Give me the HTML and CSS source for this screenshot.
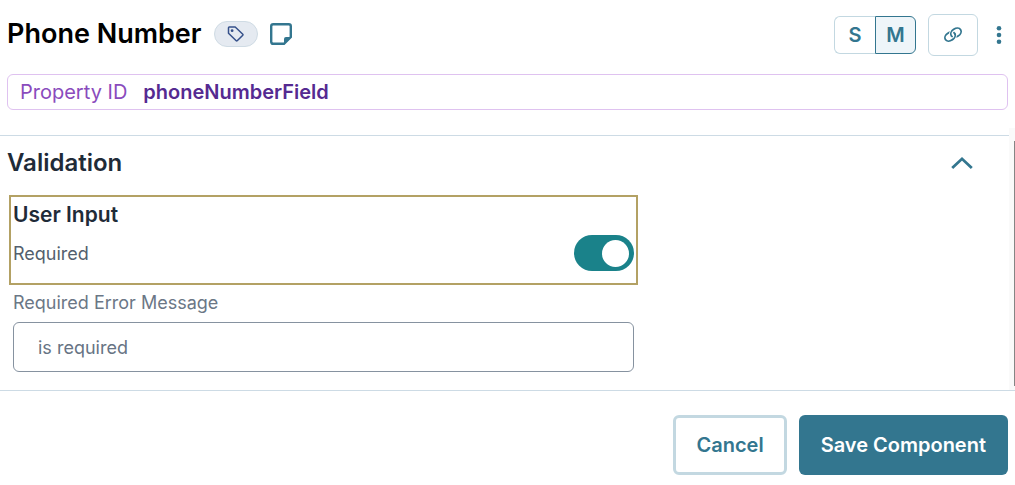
FILE: index.html
```html
<!DOCTYPE html>
<html lang="en">
<head>
<meta charset="utf-8">
<meta name="viewport" content="width=device-width, initial-scale=1">
<title>Phone Number</title>
<link rel="stylesheet" href="styles.css">
</head>
<body>
<form class="editor">
  <header class="header">
    <div class="title-group">
      <h1 class="title">Phone Number</h1>
      <button type="button" class="tag-button" aria-label="Tags">
        <svg width="18" height="18" viewBox="0 0 18 18" fill="none" stroke="#35508a" stroke-width="1.5" stroke-linejoin="round"><path d="M1.5 2.8Q1.5 2 2.3 2H8.2L15.8 9.2Q16.3 9.7 15.8 10.2L10.2 15.7Q9.7 16.2 9.2 15.7L1.5 8.2Z"/><circle cx="5.1" cy="5.7" r="1.4" fill="#35508a" stroke="none"/></svg>
      </button>
      <button type="button" class="icon-button" aria-label="Notes">
        <svg width="22" height="22" viewBox="0 0 22 22"><path d="M3.2 1.2H18.8Q20.8 1.2 20.8 3.2V14L14 20.8H3.2Q1.2 20.8 1.2 18.8V3.2Q1.2 1.2 3.2 1.2Z" fill="none" stroke="#33768f" stroke-width="2.4"/><path d="M14 21.5V16Q14 14 16 14H21.5Z" fill="#33768f"/></svg>
      </button>
    </div>
    <div class="tools">
      <div class="sizes">
        <button type="button" class="size">S</button>
        <button type="button" class="size size-active" aria-pressed="true">M</button>
      </div>
      <button type="button" class="link-button" aria-label="Link">
        <svg width="20" height="18" viewBox="0 0 20 18" fill="none" stroke="#33768f" stroke-width="1.8"><g transform="translate(10 8.6) rotate(-33)"><ellipse cx="-3.5" cy="0" rx="5.6" ry="4"/><path d="M-1.4-1.6A5.6 4 0 0 1 3.5-4" stroke="#fff" stroke-width="3.6"/><ellipse cx="3.5" cy="0" rx="5.6" ry="4"/><path d="M-2.2 4A5.6 4 0 0 0 1.4 1.6" stroke="#fff" stroke-width="3.6"/><path d="M-3.5 4A5.6 4 0 0 0 2.1 0"/></g></svg>
      </button>
      <button type="button" class="icon-button" aria-label="More options">
        <svg width="6" height="20" viewBox="0 0 6 20" fill="#33768f"><circle cx="3" cy="3.2" r="2.3"/><circle cx="3" cy="10" r="2.3"/><circle cx="3" cy="16.8" r="2.3"/></svg>
      </button>
    </div>
  </header>

  <div class="property">
    <span class="property-label">Property ID</span>
    <strong class="property-value">phoneNumberField</strong>
  </div>

  <main class="content">
    <section class="panel">
      <div class="panel-head">
        <h2 class="panel-title">Validation</h2>
        <button type="button" class="icon-button" aria-label="Collapse section" aria-expanded="true">
          <svg width="22" height="14" viewBox="0 0 22 14" fill="none" stroke="#33768f" stroke-width="2.8"><path d="M1.2 12L11 2.8L20.8 12"/></svg>
        </button>
      </div>
      <div class="fields">
        <div class="highlight">
          <h3 class="group-title">User Input</h3>
          <div class="toggle-row">
            <label class="toggle-label" for="required">Required</label>
            <input class="toggle" type="checkbox" role="switch" id="required" checked>
          </div>
        </div>
        <div class="field">
          <label class="field-label" for="message">Required Error Message</label>
          <input class="field-input" type="text" id="message" value="is required">
        </div>
      </div>
    </section>
    <div class="track"><div class="thumb"></div></div>
  </main>

  <footer class="footer">
    <button type="button" class="button button-outline">Cancel</button>
    <button type="submit" class="button button-solid">Save Component</button>
  </footer>
</form>
</body>
</html>
```

FILE: styles.css
```css
* {
  box-sizing: border-box;
}

body {
  margin: 0;
  background: #fff;
  font-family: Inter, "Liberation Sans", sans-serif;
}

h1, h2, h3 {
  margin: 0;
  font-weight: 600;
}

button, input {
  margin: 0;
  font-family: inherit;
}

button {
  display: flex;
  align-items: center;
  justify-content: center;
  padding: 0;
  border: 0;
  background: none;
  cursor: pointer;
}

svg {
  display: block;
}

.header {
  display: flex;
  justify-content: space-between;
  align-items: flex-start;
  padding: 14px 13px 0 7px;
}

.title-group {
  display: flex;
  align-items: center;
  gap: 12px;
}

.title {
  font-size: 27px;
  line-height: 40px;
  color: #000;
}

.tag-button {
  width: 44px;
  height: 26px;
  border: 1px solid #cfdbe4;
  border-radius: 13px;
  background: #e5eaf1;
}

.tools {
  display: flex;
  align-items: center;
  gap: 12px;
}

.sizes {
  display: flex;
}

.size {
  width: 41px;
  height: 38px;
  border: 1px solid #c3d8e1;
  border-right: 0;
  border-radius: 6px 0 0 6px;
  font-size: 20px;
  font-weight: 600;
  color: #33768f;
}

.size-active {
  border: 1px solid #33768f;
  border-radius: 0 6px 6px 0;
  background: #eef5f9;
}

.link-button {
  width: 50px;
  height: 42px;
  margin-right: 6px;
  border: 1px solid #c3d8e1;
  border-radius: 6px;
}

.property {
  display: flex;
  align-items: center;
  gap: 16px;
  margin: 18px 7px;
  padding: 0 12px;
  border: 1px solid #dfc2f0;
  border-radius: 6px;
  font-size: 20px;
  line-height: 34px;
}

.property-label {
  color: #8a4bbd;
}

.property-value {
  font-weight: 600;
  color: #552a91;
}

.content {
  display: flex;
  border-bottom: 1px solid #cddbe5;
}

.panel {
  flex: 1;
  margin-top: 7px;
  padding-bottom: 18px;
  border-top: 1px solid #cddbe5;
}

.panel-head {
  display: flex;
  align-items: center;
  justify-content: space-between;
  padding: 12px 36px 18px 7px;
}

.panel-title {
  font-size: 24px;
  line-height: 29px;
  color: #1f2b38;
}

.fields {
  max-width: 638px;
  padding-left: 9px;
}

.highlight {
  padding: 2px 2px 12px;
  border: 2px solid #b3a164;
}

.group-title {
  font-size: 21px;
  line-height: 32px;
  color: #1f2b38;
}

.toggle-row {
  display: flex;
  align-items: center;
  justify-content: space-between;
  margin-top: 4px;
}

.toggle-label {
  font-size: 18px;
  color: #535f6e;
}

.toggle {
  display: flex;
  align-items: center;
  justify-content: flex-end;
  width: 60px;
  height: 36px;
  padding: 0 5px;
  border-radius: 18px;
  background: #1a828a;
  appearance: none;
}

.toggle::before {
  content: "";
  width: 27px;
  height: 27px;
  border-radius: 50%;
  background: #fff;
}

.toggle:not(:checked) {
  justify-content: flex-start;
  background: #8692a0;
}

.field {
  display: flex;
  flex-direction: column;
  gap: 7px;
  padding: 6px 4px 0;
}

.field-label {
  font-size: 18px;
  line-height: 24px;
  color: #6b7786;
}

.field-input {
  width: 100%;
  height: 50px;
  padding: 0 24px;
  border: 1px solid #8692a0;
  border-radius: 6px;
  background: #fff;
  font-size: 18px;
  color: #677484;
}

.track {
  display: flex;
  justify-content: flex-end;
  width: 6px;
  padding: 13px 0 4px;
  background: #fafafa;
}

.thumb {
  width: 1px;
  background: #858585;
}

.footer {
  display: flex;
  justify-content: flex-end;
  gap: 12px;
  padding: 24px 7px 10px;
}

.button {
  height: 60px;
  padding: 0 22px;
  border-radius: 6px;
  font-size: 20px;
  font-weight: 600;
}

.button-outline {
  padding: 0 20px;
  border: 3px solid #c3d8e1;
  color: #33768f;
}

.button-solid {
  background: #33768f;
  color: #fff;
}
```
